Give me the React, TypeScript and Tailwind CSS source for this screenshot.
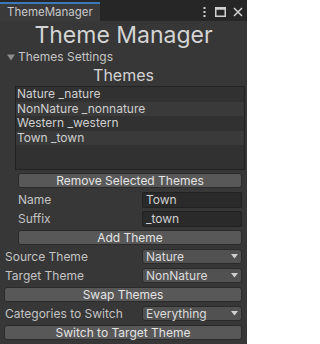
import React from "react";

const themes = ["Nature _nature", "NonNature _nonnature", "Western _western", "Town _town"];

const Btn = ({ label, className = "" }: { label: string; className?: string }) => (
  <div
    className={`flex h-[15px] items-center justify-center rounded-[3px] border border-[#2a2a2a] bg-[#585858] text-[12px] leading-none text-[#e4e4e4] ${className}`}
  >
    {label}
  </div>
);

const Dropdown = ({ value }: { value: string }) => (
  <div className="flex h-[15px] w-[100px] items-center justify-between rounded-[3px] border border-[#2a2a2a] bg-[#515151] pl-[3px] pr-[3px] text-[12px] leading-none text-[#dcdcdc]">
    <span>{value}</span>
    <svg width="7" height="5" viewBox="0 0 7 5">
      <path d="M0 0 H7 L3.5 4.5 Z" fill="#d0d0d0" />
    </svg>
  </div>
);

const Field = ({ value }: { value: string }) => (
  <div className="flex h-[16px] w-[100px] items-center rounded-[2px] border border-[#212121] bg-[#2a2a2a] px-[3px] text-[12px] leading-none text-[#d2d2d2]">
    {value}
  </div>
);

export default function App() {
  return (
    <div
      className="flex h-[344px] w-[247px] flex-col overflow-hidden bg-[#373737] text-[#c4c4c4]"
      style={{ fontFamily: "Inter, 'Noto Sans', sans-serif" }}
    >
      {/* Tab bar */}
      <div className="flex h-[21px] shrink-0 items-end bg-[#262626]">
        <div className="flex h-[19px] w-[100px] items-center border-t-2 border-[#3a79bb] bg-[#3a3a3a] pl-[7px] pt-[1px] text-[11.5px] text-[#c8c8c8]">
          ThemeManager
        </div>
        <div className="ml-auto flex h-[19px] items-center gap-[5px] pr-[4px] text-[#c8c8c8]">
          <svg width="3" height="10" viewBox="0 0 3 10">
            <rect x="0.5" y="0" width="2" height="2" fill="#d0d0d0" />
            <rect x="0.5" y="4" width="2" height="2" fill="#d0d0d0" />
            <rect x="0.5" y="8" width="2" height="2" fill="#d0d0d0" />
          </svg>
          <svg width="11" height="10" viewBox="0 0 11 10" className="ml-[4px]">
            <rect x="0.75" y="0.75" width="9.5" height="8.5" fill="none" stroke="#d0d0d0" strokeWidth="1.5" />
            <rect x="0.75" y="0.75" width="9.5" height="2" fill="#d0d0d0" />
          </svg>
          <svg width="10" height="10" viewBox="0 0 10 10" className="ml-[2px]">
            <path d="M1 1 L9 9 M9 1 L1 9" stroke="#d0d0d0" strokeWidth="1.5" />
          </svg>
        </div>
      </div>

      {/* Title */}
      <div className="flex h-[29px] items-center justify-center text-[23px] leading-none text-[#d4d4d4]">
        Theme Manager
      </div>

      {/* Foldout */}
      <div className="flex h-[14px] items-center gap-[2px] pl-[7px] text-[12px] leading-none text-[#c4c4c4]">
        <svg width="8" height="7" viewBox="0 0 8 7">
          <path d="M0 0.5 H8 L4 6.5 Z" fill="#8c8c8c" />
        </svg>
        <span className="ml-[1px]">Themes Settings</span>
      </div>

      <div className="flex h-[22px] items-center justify-center text-[16px] leading-none text-[#d4d4d4]">
        Themes
      </div>

      {/* List */}
      <div className="ml-[15px] mr-[2px] h-[84px] border border-[#232323] bg-[#313131]">
        {themes.map((t, i) => (
          <div
            key={t}
            className={`flex h-[14.5px] items-center pl-[1px] text-[12px] leading-none text-[#cfcfcf] ${
              i % 2 === 1 ? "bg-[#3a3a3a]" : ""
            }`}
          >
            {t}
          </div>
        ))}
      </div>

      <div className="mt-[3px] flex flex-col gap-[4px] pr-[5px]">
        <Btn label="Remove Selected Themes" className="ml-[18px]" />
        <div className="flex h-[15px] items-center justify-between pl-[18px] text-[12px]">
          <span>Name</span>
          <Field value="Town" />
        </div>
        <div className="flex h-[15px] items-center justify-between pl-[18px] text-[12px]">
          <span>Suffix</span>
          <Field value="_town" />
        </div>
        <Btn label="Add Theme" className="ml-[18px]" />
        <div className="flex h-[15px] items-center justify-between pl-[5px] text-[12px]">
          <span>Source Theme</span>
          <Dropdown value="Nature" />
        </div>
        <div className="flex h-[15px] items-center justify-between pl-[5px] text-[12px]">
          <span>Target Theme</span>
          <Dropdown value="NonNature" />
        </div>
        <Btn label="Swap Themes" className="ml-[4px]" />
        <div className="flex h-[15px] items-center justify-between pl-[5px] text-[12px]">
          <span>Categories to Switch</span>
          <Dropdown value="Everything" />
        </div>
        <Btn label="Switch to Target Theme" className="ml-[4px]" />
      </div>
    </div>
  );
}
